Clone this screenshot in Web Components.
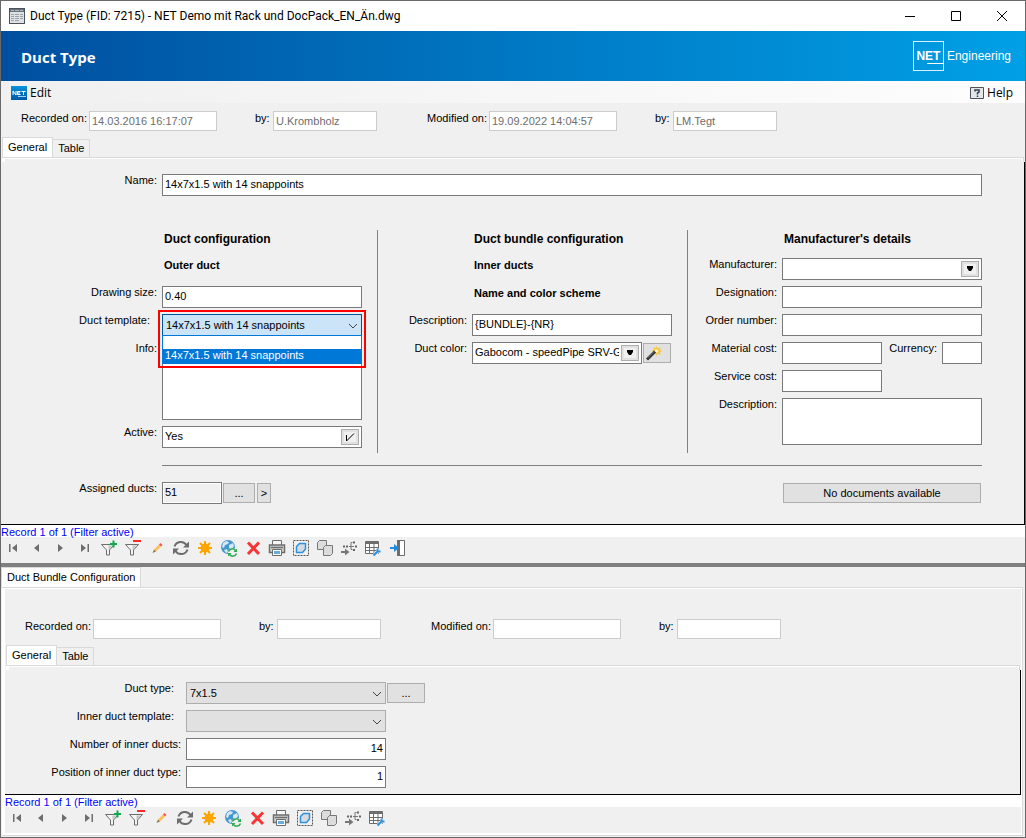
<!DOCTYPE html>
<html lang="en">
<head>
<meta charset="utf-8">
<meta name="viewport" content="width=device-width, initial-scale=1">
<title>Duct Type (FID: 7215)</title>
<style>
  html, body {
    height: 100%;
    margin: 0;
  }
  body {
    background: #f0f0f0;
    color: #000;
    font: 11px/13px "Liberation Sans", Arial, sans-serif;
  }
</style>
</head>
<body>
<app-window caption="Duct Type (FID: 7215) - NET Demo mit Rack und DocPack_EN_Än.dwg">
  <brand-banner heading="Duct Type"></brand-banner>
  <menu-bar></menu-bar>
  <record-info recorded="14.03.2016 16:17:07" recorded-by="U.Krombholz" modified="19.09.2022 14:04:57" modified-by="LM.Tegt"></record-info>
  <tab-panel tabs="General,Table">
    <duct-form></duct-form>
  </tab-panel>
  <record-bar status="Record 1 of 1 (Filter active)" exit></record-bar>
  <split-bar></split-bar>
  <tab-panel boxed tabs="Duct Bundle Configuration">
    <record-info inset></record-info>
    <tab-panel tabs="General,Table">
      <bundle-form></bundle-form>
    </tab-panel>
    <record-bar status="Record 1 of 1 (Filter active)"></record-bar>
  </tab-panel>
</app-window>

<script>
// Window frame with the caption bar
class AppWindow extends HTMLElement {
  constructor() {
    super();
    this.attachShadow({ mode: "open" });
  }

  connectedCallback() {
    this.shadowRoot.innerHTML = `
      <style>
        :host {
          display: flex;
          flex-direction: column;
          box-sizing: border-box;
          min-height: 100vh;
          border: 1px solid #696969;
          background: #f0f0f0;
        }
        header {
          display: flex;
          align-items: center;
          height: 30px;
          padding-left: 8px;
          background: #fff;
        }
        h1 {
          flex: 1;
          margin: 0 0 0 5px;
          font: 12px/16px Roboto, "Noto Sans", sans-serif;
          white-space: nowrap;
        }
        button {
          width: 46px;
          height: 30px;
          padding: 0;
          border: 0;
          background: none;
        }
        svg {
          display: block;
          margin: auto;
        }
        .icon { margin: 0; }
      </style>
      <header>
        <svg class="icon" width="16" height="16" viewBox="0 0 16 16">
          <rect x=".5" y=".5" width="15" height="15" fill="#c9ced3" stroke="#4b5158"/>
          <path d="M1 1h14v3H1z" fill="#69727c"/>
          <path d="M2 2.500h3M6 2.500h4M11 2.500h3" stroke="#aeb6be"/>
          <path d="M1 4h14v11H1z" fill="#dfe2e5"/>
          <path d="M2 6.500h3M2 8.500h3M2 10.500h3M2 12.500h3M6 6.500h4M6 8.500h4M6 10.500h4M6 12.500h4M11 6.500h3M11 8.500h3M11 10.500h3" stroke="#9aa2aa"/>
        </svg>
        <h1>${this.getAttribute("caption")}</h1>
        <button aria-label="Minimize"><svg width="12" height="12"><path d="M1 6.500h10" stroke="#000"/></svg></button>
        <button aria-label="Maximize"><svg width="12" height="12"><path d="M1.500 1.500h9v9h-9z" fill="none" stroke="#000"/></svg></button>
        <button aria-label="Close"><svg width="12" height="12"><path d="M1 1l10 10M11 1L1 11" stroke="#000"/></svg></button>
      </header>
      <slot></slot>
    `;
  }
}
customElements.define("app-window", AppWindow);

class BrandBanner extends HTMLElement {
  constructor() {
    super();
    this.attachShadow({ mode: "open" });
  }

  connectedCallback() {
    this.shadowRoot.innerHTML = `
      <style>
        :host {
          display: flex;
          align-items: center;
          justify-content: space-between;
          height: 50px;
          padding: 0 14px 0 20px;
          background: linear-gradient(90deg, #004f9f, #00a0e6);
          color: #fff;
        }
        h2 {
          margin: 0;
          padding-top: 2px;
          font: bold 15px/20px "Open Sans", "Noto Sans", sans-serif;
        }
        .brand {
          display: flex;
          align-items: center;
          gap: 3px;
          font-size: 12px;
          line-height: 16px;
        }
        .mark {
          display: flex;
          flex-direction: column;
          box-sizing: border-box;
          width: 31px;
          height: 30px;
          padding-top: 7px;
          border: 1px solid #d6effb;
          text-align: center;
          font-weight: bold;
          line-height: 14px;
        }
        .mark::after {
          content: "";
          height: 1px;
          margin-left: 13px;
          background: #fff;
        }
      </style>
      <h2>${this.getAttribute("heading")}</h2>
      <div class="brand"><span class="mark">NET</span><span>Engineering</span></div>
    `;
  }
}
customElements.define("brand-banner", BrandBanner);

class MenuBar extends HTMLElement {
  constructor() {
    super();
    this.attachShadow({ mode: "open" });
  }

  connectedCallback() {
    this.shadowRoot.innerHTML = `
      <style>
        :host {
          display: flex;
          justify-content: space-between;
          box-sizing: border-box;
          height: 22px;
          padding: 1px 12px 0 10px;
          background: linear-gradient(90deg, #f0f0f0, #fdfdfd);
        }
        button {
          display: flex;
          align-items: center;
          gap: 3px;
          padding: 0;
          border: 0;
          background: none;
          color: #000;
          font: 12px/16px "Open Sans", "Noto Sans", sans-serif;
        }
      </style>
      <button>
        <svg width="16" height="14" viewBox="0 0 16 14">
          <defs><linearGradient id="g" x2="0" y2="1"><stop stop-color="#0a93dc"/><stop offset="1" stop-color="#0059a8"/></linearGradient></defs>
          <path d="M0 0h16v14H0z" fill="url(#g)"/>
          <path d="M2 9V5l3 4V5M9.500 5.500H6.500v3h3M6.500 7h2.500M10.500 5.500h4M12.500 5.500V9" fill="none" stroke="#fff"/>
          <path d="M7 10.500h8" stroke="#9fd0ee"/>
        </svg>
        Edit
      </button>
      <button>
        <svg width="14" height="12" viewBox="0 0 14 12">
          <path d="M.5.5h13v11H.5z" fill="#e4e6ea" stroke="#4d535b"/>
          <path d="M5 4.500V3h4v2L7.500 6v1.500M7.500 8.500v1.500" fill="none" stroke="#333b49" stroke-width="1.500"/>
        </svg>
        Help
      </button>
    `;
  }
}
customElements.define("menu-bar", MenuBar);

// Created / changed stamps of the current record
class RecordInfo extends HTMLElement {
  constructor() {
    super();
    this.attachShadow({ mode: "open" });
  }

  connectedCallback() {
    const value = (name) => this.getAttribute(name) || "";
    this.shadowRoot.innerHTML = `
      <style>
        :host {
          display: flex;
          padding: 8px 0 6px;
        }
        :host([inset]) { padding-top: 30px; }
        label {
          box-sizing: border-box;
          width: 86px;
          margin-right: 2px;
          text-align: right;
          line-height: 14px;
          white-space: nowrap;
        }
        .by {
          width: 54px;
          padding-left: 38px;
          text-align: left;
        }
        .modified { width: 110px; }
        input {
          box-sizing: border-box;
          width: 128px;
          height: 20px;
          padding: 0 2px;
          border: 1px solid #ccc;
          background: #fff;
          color: #6d6d6d;
          font: inherit;
        }
        .user { width: 104px; }
      </style>
      <label for="recorded">Recorded on:</label>
      <input id="recorded" value="${value("recorded")}" readonly>
      <label class="by" for="recorded-by">by:</label>
      <input class="user" id="recorded-by" value="${value("recorded-by")}" readonly>
      <label class="modified" for="modified">Modified on:</label>
      <input id="modified" value="${value("modified")}" readonly>
      <label class="by" for="modified-by">by:</label>
      <input class="user" id="modified-by" value="${value("modified-by")}" readonly>
    `;
  }
}
customElements.define("record-info", RecordInfo);

class TabPanel extends HTMLElement {
  constructor() {
    super();
    this.attachShadow({ mode: "open" });
  }

  connectedCallback() {
    const tabs = this.getAttribute("tabs").split(",");
    this.shadowRoot.innerHTML = `
      <style>
        :host {
          display: flex;
          flex-direction: column;
        }
        :host([boxed]) { flex: 1; }
        .tabs {
          display: flex;
          align-items: flex-end;
          height: 20px;
          padding-left: 1px;
        }
        button {
          height: 18px;
          padding: 0 5px;
          border: 1px solid #d9d9d9;
          border-width: 1px 1px 0 0;
          background: #f0f0f0;
          color: #000;
          font: inherit;
          line-height: 17px;
        }
        button[aria-selected="true"] {
          height: 20px;
          border-left-width: 1px;
          background: #fff;
        }
        .edge {
          height: 4px;
          margin: 0 1px;
          border: solid #d9d9d9;
          border-width: 1px 1px 0 0;
          box-shadow: inset 3px 0 #fff, inset -1px 1px #fff;
        }
        .body {
          border-right: 1px solid #000;
        }
        :host([boxed]) .tabs { padding-left: 0; }
        :host([boxed]) .edge { display: none; }
        :host([boxed]) .body {
          flex: 1;
          margin: 0 2px 1px 1px;
          padding: 1px 1px 2px 3px;
          border: solid #d9d9d9;
          border-width: 1px 1px 1px 0;
          background: #fff;
        }
        :host([boxed]) .fill {
          min-height: 100%;
          background: #f0f0f0;
        }
      </style>
      <div class="tabs" role="tablist">
        ${tabs.map((tab, i) => `<button role="tab" aria-selected="${i === 0}">${tab}</button>`).join("")}
      </div>
      <div class="edge"></div>
      <div class="body" role="tabpanel"><div class="fill"><slot></slot></div></div>
    `;
  }
}
customElements.define("tab-panel", TabPanel);

class PushButton extends HTMLElement {
  constructor() {
    super();
    this.attachShadow({ mode: "open" });
  }

  connectedCallback() {
    this.shadowRoot.innerHTML = `
      <style>
        :host {
          display: block;
          flex: none;
          height: 20px;
          margin-top: 1px;
        }
        button {
          display: flex;
          align-items: center;
          justify-content: center;
          box-sizing: border-box;
          width: 100%;
          height: 100%;
          padding: 0;
          border: 1px solid #adadad;
          background: #e1e1e1;
          color: #000;
          font: inherit;
        }
      </style>
      <button aria-label="${this.getAttribute("label") || this.textContent.trim()}"><slot></slot></button>
    `;
  }
}
customElements.define("push-button", PushButton);

// Label with its control. Kinds: text, select, area, lookup, toggle
class FormField extends HTMLElement {
  constructor() {
    super();
    this.attachShadow({ mode: "open" });
  }

  connectedCallback() {
    this.render();
  }

  control() {
    const value = this.getAttribute("value") || "";
    const label = this.getAttribute("label");
    switch (this.getAttribute("kind")) {
      case "select":
        return `
          <select id="control"><option>${value}</option></select>
          <svg class="arrow" width="10" height="6"><path d="M1 1l4 4 4-4" fill="none" stroke="#444"/></svg>`;
      case "area":
        return `<textarea id="control"></textarea>`;
      case "lookup":
        return `
          <input id="control" value="${value}">
          <button aria-label="Choose ${label}"><svg width="8" height="6"><path d="M1 0h6v2L5 5H3L1 2z"/></svg></button>`;
      case "toggle":
        return `
          <input id="control" value="${value}">
          <button aria-label="Toggle ${label}"><svg width="10" height="10"><path d="M1.500 3v6L9 1.500" fill="none" stroke="#000"/></svg></button>`;
      default:
        return `<input id="control" value="${value}">`;
    }
  }

  render() {
    this.shadowRoot.innerHTML = `
      <style>
        :host {
          display: flex;
          min-width: 0;
        }
        label {
          flex: none;
          box-sizing: border-box;
          width: var(--label-width, 94px);
          padding-right: 5px;
          text-align: right;
          white-space: nowrap;
        }
        :host([kind="select"]) label { padding-right: 12px; }
        .control {
          position: relative;
          display: flex;
          flex: 1;
          box-sizing: border-box;
          min-width: 0;
          height: var(--control-height, 22px);
          border: 1px solid #7a7a7a;
          background: #fff;
        }
        input, select, textarea {
          flex: 1;
          box-sizing: border-box;
          width: 100%;
          min-width: 0;
          margin: 0;
          padding: 0 2px 2px;
          border: 0;
          outline: 0;
          background: none;
          color: inherit;
          font: inherit;
          resize: none;
        }
        select {
          padding: 0 3px;
          appearance: none;
        }
        :host([align="right"]) input { text-align: right; }
        .control button {
          display: flex;
          flex: none;
          align-items: center;
          justify-content: center;
          box-sizing: border-box;
          width: 18px;
          height: 16px;
          margin: 2px 2px 0 0;
          padding: 0;
          border: 1px solid #adadad;
          background: #f0f0f0;
          box-shadow: inset 0 0 0 2px #e1e1e1;
        }
        .arrow {
          position: absolute;
          right: 3px;
          top: 8px;
          pointer-events: none;
        }
        :host([kind="select"]) .control {
          border-color: #adadad;
          background: #e1e1e1;
        }
        :host([open]) .control {
          border-color: #005499;
          background: #cce4f7;
        }
        :host([locked]) .control {
          background: #f0f0f0;
          box-shadow: inset 0 0 0 1px #fff;
        }
      </style>
      <label for="control">${this.getAttribute("label")}</label>
      <div class="control">${this.control()}<slot name="popup"></slot></div>
      <slot></slot>
    `;
  }
}
customElements.define("form-field", FormField);

// Opened list below a select, with its highlight frame
class DropList extends HTMLElement {
  constructor() {
    super();
    this.attachShadow({ mode: "open" });
  }

  connectedCallback() {
    this.shadowRoot.innerHTML = `
      <style>
        :host {
          position: absolute;
          z-index: 1;
          top: 20px;
          left: -1px;
          right: -1px;
        }
        ul {
          margin: 0;
          padding: 0;
          border: 1px solid #0078d7;
          background: #fff;
          list-style: none;
        }
        li {
          height: 13px;
          padding: 0 2px;
        }
        li[aria-selected="true"] {
          height: 14px;
          background: #0078d7;
          color: #fff;
        }
        .frame {
          position: absolute;
          inset: -25px -4px -4px;
          border: 2px solid #f00;
          pointer-events: none;
        }
      </style>
      <ul role="listbox">
        <li role="option"></li>
        <li role="option" aria-selected="true">${this.getAttribute("value")}</li>
      </ul>
      <div class="frame"></div>
    `;
  }
}
customElements.define("drop-list", DropList);

class DuctForm extends HTMLElement {
  constructor() {
    super();
    this.attachShadow({ mode: "open" });
  }

  connectedCallback() {
    this.shadowRoot.innerHTML = `
      <style>
        :host {
          display: block;
          padding: 12px 42px 20px 0;
        }
        .wide { --label-width: 161px; }
        .columns {
          display: grid;
          grid-template-columns: 377fr 310fr 294fr;
          margin-top: 34px;
        }
        .column {
          display: flex;
          flex-direction: column;
          gap: 6px;
          padding: 0 15px 5px 0;
          border-right: 1px solid #808080;
        }
        .column:last-child {
          padding-right: 0;
          border: 0;
        }
        h3, h4 {
          height: 22px;
          margin: 0 0 0 96px;
          font-size: 12px;
          line-height: 18px;
          white-space: nowrap;
        }
        h4 {
          font-size: 11px;
          line-height: 14px;
        }
        .wide h3, .wide h4 { margin-left: 163px; }
        hr {
          margin: 12px 0 16px 161px;
          border: 0;
          border-top: 1px solid #808080;
        }
        .info { --control-height: 78px; }
        .notes { --control-height: 47px; }
        .costs { display: flex; }
        .cost { width: 194px; }
        .currency {
          --label-width: 60px;
          flex: 1;
        }
        .assigned { width: 221px; }
        .footer {
          display: flex;
          gap: 1px;
        }
        .wand {
          width: 28px;
          margin-left: 1px;
          margin-right: 1px;
        }
        .more { width: 32px; }
        .go {
          width: 14px;
          margin-left: 1px;
        }
        .documents {
          width: 198px;
          margin-left: auto;
          margin-right: 1px;
        }
      </style>
      <form-field class="wide" label="Name:" value="14x7x1.5 with 14 snappoints"></form-field>
      <div class="columns">
        <div class="column wide">
          <h3>Duct configuration</h3>
          <h4>Outer duct</h4>
          <form-field label="Drawing size:" value="0.40"></form-field>
          <form-field kind="select" open label="Duct template:" value="14x7x1.5 with 14 snappoints">
            <drop-list slot="popup" value="14x7x1.5 with 14 snappoints"></drop-list>
          </form-field>
          <form-field class="info" kind="area" label="Info:"></form-field>
          <form-field kind="toggle" label="Active:" value="Yes"></form-field>
        </div>
        <div class="column">
          <h3>Duct bundle configuration</h3>
          <h4>Inner ducts</h4>
          <h4>Name and color scheme</h4>
          <form-field label="Description:" value="{BUNDLE}-{NR}"></form-field>
          <form-field kind="lookup" label="Duct color:" value="Gabocom - speedPipe SRV-G 7">
            <push-button class="wand" label="Edit color scheme">
              <svg width="26" height="18" viewBox="0 0 26 18">
                <path d="M12.500 2l1.300 2.500L16.500 3l-.5 2.800 2 1.200-2 1.200.5 2.800-2.700-1.300-1.300 2.300-1.300-2.300L9 10.500l.5-2.500-2-1.500 2.300-.7L9 3l2.500 1.200z" fill="#f6c644"/>
                <circle cx="12.500" cy="7" r="1.800" fill="#fff3c0"/>
                <path d="M3 15.500l8-8" stroke="#333" stroke-width="3"/>
                <path d="M3.500 14l6.500-6.500" stroke="#888"/>
              </svg>
            </push-button>
          </form-field>
        </div>
        <div class="column">
          <h3>Manufacturer's details</h3>
          <form-field kind="lookup" label="Manufacturer:"></form-field>
          <form-field label="Designation:"></form-field>
          <form-field label="Order number:"></form-field>
          <div class="costs">
            <form-field class="cost" label="Material cost:"></form-field>
            <form-field class="currency" label="Currency:"></form-field>
          </div>
          <form-field class="cost" label="Service cost:"></form-field>
          <form-field class="notes" kind="area" label="Description:"></form-field>
        </div>
      </div>
      <hr>
      <div class="footer">
        <form-field class="wide assigned" locked label="Assigned ducts:" value="51"></form-field>
        <push-button class="more">...</push-button>
        <push-button class="go">&gt;</push-button>
        <push-button class="documents">No documents available</push-button>
      </div>
    `;
  }
}
customElements.define("duct-form", DuctForm);

class BundleForm extends HTMLElement {
  constructor() {
    super();
    this.attachShadow({ mode: "open" });
  }

  connectedCallback() {
    this.shadowRoot.innerHTML = `
      <style>
        :host {
          --label-width: 181px;
          display: flex;
          flex-direction: column;
          gap: 6px;
          padding: 12px 0 6px;
        }
        .line {
          display: flex;
          gap: 1px;
        }
        form-field { width: 381px; }
        push-button { width: 38px; }
      </style>
      <div class="line">
        <form-field kind="select" label="Duct type:" value="7x1.5"></form-field>
        <push-button>...</push-button>
      </div>
      <form-field kind="select" label="Inner duct template:"></form-field>
      <form-field align="right" label="Number of inner ducts:" value="14"></form-field>
      <form-field align="right" label="Position of inner duct type:" value="1"></form-field>
    `;
  }
}
customElements.define("bundle-form", BundleForm);

class SplitBar extends HTMLElement {
  constructor() {
    super();
    this.attachShadow({ mode: "open" });
    this.shadowRoot.innerHTML = `
      <style>
        :host {
          display: block;
          height: 4px;
          background: #808080;
        }
      </style>
    `;
  }
}
customElements.define("split-bar", SplitBar);

// All icons are drawn on a 24 x 22 grid, the size of a toolbar button
const funnel = `
  <path d="M4.500 7.500h13l-5 5.500v5h-3v-5z" fill="#f4f4f4" stroke="#6d6d6d"/>
  <path d="M11.500 8.500h4l-4 4.500z" fill="#c4c4c4"/>`;

const icons = {
  "First record": `<path d="M8 7h1.500v8H8zM16 7v8l-5-4z" fill="#6d6d6d"/>`,
  "Previous record": `<path d="M14 7v8l-5-4z" fill="#6d6d6d"/>`,
  "Next record": `<path d="M9 7v8l5-4z" fill="#6d6d6d"/>`,
  "Last record": `<path d="M8 7v8l5-4zM14.500 7H16v8h-1.500z" fill="#6d6d6d"/>`,
  "Set filter": `${funnel}<path d="M13 6h7v2h-7zM15.500 3.500h2v7h-2z" fill="#10a84e"/>`,
  "Remove filter": `${funnel}<path d="M12 3h8v2h-8z" fill="#fb2a2a"/>`,
  "Edit": `
    <path d="M9 12.500l5-5 2 2-5 5z" fill="#fbbf55"/>
    <path d="M14 7.500l1.500-1.500 2 2L16 9.500z" fill="#f0525a"/>
    <path d="M9 12.500l2 2-3.500 1.500z" fill="#8b7355"/>`,
  "Refresh": `
    <path d="M5.500 9.500a6.700 6.700 0 0 1 12-1.500M18.500 12.500a6.700 6.700 0 0 1-12 1.500" fill="none" stroke="#6d6d6d" stroke-width="2"/>
    <path d="M20 4.500v6h-6zM4 17.500v-6h6z" fill="#6d6d6d"/>`,
  "New record": `
    <path d="M12 4v14M5 11h14M7 6l10 10M17 6L7 16" stroke="#fda500" stroke-width="2"/>
    <circle cx="12" cy="11" r="4.500" fill="#fda500"/>`,
  "Update map": `
    <circle cx="11" cy="10" r="7" fill="#4497cd"/>
    <path d="M6 6l3-2 3 1-1 2-3 1-1 3-2-1zM12 8l4-2 1 3-2 3-3-1zM7 13l3-1 1 3-2 1z" fill="#d5e9f5"/>
    <circle cx="15.500" cy="15.500" r="4.500" fill="#f0f0f0"/>
    <path d="M11.500 14.500a4 4 0 0 1 7-1M19.500 16.500a4 4 0 0 1-7 1" fill="none" stroke="#2fa84f" stroke-width="1.500"/>
    <path d="M20 11.500V15h-3.500zM11 19.500V16h3.500z" fill="#2fa84f"/>`,
  "Delete": `<path d="M7 5.500l11 11.500M18 5.500L7 17" stroke="#f83434" stroke-width="3"/>`,
  "Print": `
    <path d="M7.500 8V3.500h9V8" fill="#f6f6f6" stroke="#6d6d6d"/>
    <path d="M4.500 8h15v7.500h-15z" fill="#d2d2d2" stroke="#6d6d6d" stroke-width="1.500"/>
    <path d="M6 10.500h12" stroke="#6d6d6d" stroke-width="1.500"/>
    <path d="M7.500 12.500h9v6h-9z" fill="#fff" stroke="#6d6d6d"/>
    <path d="M9 14h6v3H9z" fill="#66aee2"/>`,
  "Select in drawing": `
    <path d="M4.500 3.500h15v15h-15z" fill="none" stroke="#555" stroke-dasharray="2 1"/>
    <path d="M7.500 9.500l3-3h6v5.500l-3 3.500h-6z" fill="#d5dbe0" stroke="#2f91dc" stroke-width="1.500" stroke-linejoin="round"/>`,
  "Copy": `
    <path d="M4.500 5.500l2-2h7v7l-2 2h-7z" fill="#dcdcdc" stroke="#777"/>
    <path d="M10.500 10.500l2-2h7v8l-2 2h-7z" fill="#dcdcdc" stroke="#777"/>`,
  "Trace": `
    <path d="M4 14h4v-2.500l4.500 3.500L8 18.500V16H4z" fill="#777"/>
    <path d="M12 9.500h2.500M15.500 5.500H14v7h1.500M14 9.500h3" fill="none" stroke="#777"/>
    <path d="M6 8.500h2v2H6zM9 8.500h2v2H9zM16 4.500h2v2h-2zM18 8.500h2v2h-2zM16 12h2v2h-2z" fill="#666"/>`,
  "Table settings": `
    <path d="M4.500 4.500h13v12h-13z" fill="#fff" stroke="#6d6d6d"/>
    <path d="M4 5h14v2H4z" fill="#6d6d6d"/>
    <path d="M4.500 10.500h13M4.500 13.500h13M8.500 6v10.500M13 6v10.500" stroke="#6d6d6d"/>
    <path d="M14 19l-2-2 5-5.500h3V14z" fill="#f0f0f0"/>
    <path d="M12.500 18.500l4.500-4.500M16.500 11.500v3h3" fill="none" stroke="#2c91dc" stroke-width="2"/>`,
};

const exitIcon = `
  <path d="M12.500 3.500h7v15h-7z" fill="#fff" stroke="#6d6d6d"/>
  <path d="M12 3h3v16h-3z" fill="#6d6d6d"/>
  <path d="M5 10h4V7l5 4-5 4v-3H5z" fill="#1e8bdc"/>`;

class RecordBar extends HTMLElement {
  constructor() {
    super();
    this.attachShadow({ mode: "open" });
  }

  connectedCallback() {
    const entries = Object.entries(icons);
    if (this.hasAttribute("exit")) entries.push(["Close form", exitIcon]);
    this.shadowRoot.innerHTML = `
      <style>
        :host {
          display: block;
          border-top: 1px solid #000;
        }
        output {
          display: block;
          height: 12px;
          background: #fff;
          color: #00f;
          line-height: 14px;
        }
        .tools {
          display: flex;
          padding-bottom: 4px;
        }
        button {
          width: 24px;
          height: 22px;
          padding: 0;
          border: 0;
          background: none;
        }
        svg { display: block; }
      </style>
      <output>${this.getAttribute("status")}</output>
      <div class="tools" role="toolbar">
        ${entries.map(([name, art]) => `<button aria-label="${name}"><svg width="24" height="22" viewBox="0 0 24 22">${art}</svg></button>`).join("")}
      </div>
    `;
  }
}
customElements.define("record-bar", RecordBar);
</script>
</body>
</html>
